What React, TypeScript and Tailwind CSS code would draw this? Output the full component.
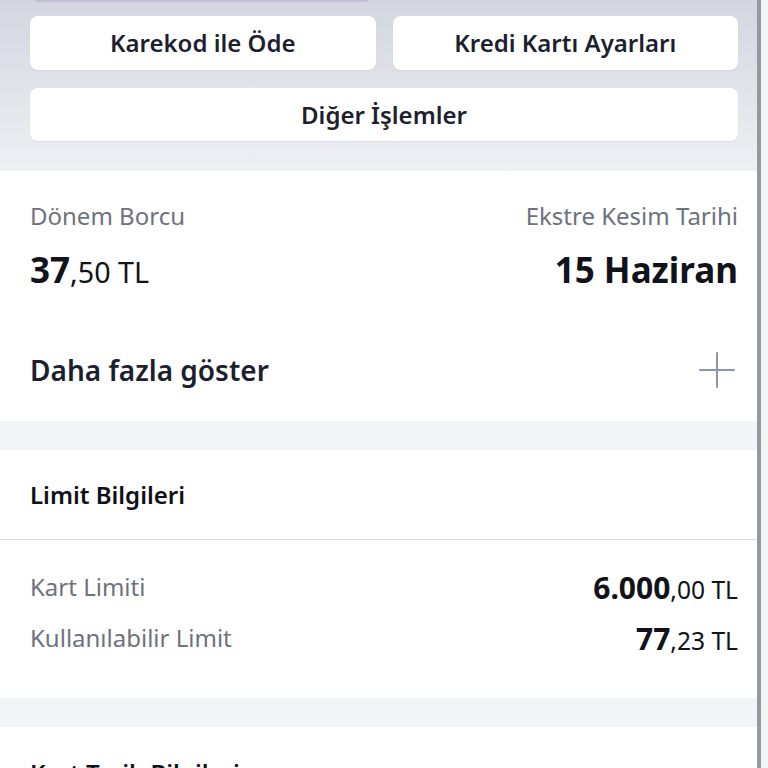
const font = { fontFamily: "'Noto Sans', Lato, sans-serif" };

const ActionButton = ({ label, className = "" }: { label: string; className?: string }) => {
	return (
		<button
			className={`flex shrink-0 items-center justify-center rounded-lg bg-white text-[24px] font-semibold text-[#1d1f2e] shadow-[0_1px_2px_rgba(30,40,80,0.06)] ${className}`}
		>
			{label}
		</button>
	);
};

const Amount = ({ whole, rest, className = "" }: { whole: string; rest: string; className?: string }) => {
	return (
		<span className={`text-[#11121a] ${className}`}>
			<span className="font-bold">{whole}</span>
			<span className="text-[0.82em] font-normal">{rest}</span>
		</span>
	);
};

const PlusIcon = () => (
	<svg width="36" height="36" viewBox="0 0 36 36" fill="none" className="mr-[3px]">
		<path d="M18 1v34M1 18h34" stroke="#8c95ab" strokeWidth="2" strokeLinecap="round" />
	</svg>
);

const Gap = () => <div className="h-[29px] shrink-0 bg-[#f2f4f8]" />;

export default function App() {
	return (
		<div className="flex h-[768px] w-[768px] overflow-hidden bg-white" style={font}>
			<main className="flex w-[757px] shrink-0 flex-col">
				<header className="flex shrink-0 flex-col bg-gradient-to-b from-[#d3d6e0] to-[#eef0f4] pl-[30px] pr-[19px] pb-[30px]">
					<div className="ml-[5px] h-[2px] w-[333px] rounded-b bg-[#c4bfd4]" />
					<div className="mt-[14px] grid grid-cols-2 gap-[17px]">
						<ActionButton label="Karekod ile Öde" className="h-[54px]" />
						<ActionButton label="Kredi Kartı Ayarları" className="h-[54px]" />
					</div>
					<ActionButton label="Diğer İşlemler" className="mt-[18px] h-[53px]" />
				</header>

				<section className="flex shrink-0 flex-col bg-white pl-[30px] pr-[19px] pt-[30px] pb-[31px]">
					<div className="flex h-[30px] items-center justify-between text-[24px] text-[#6e727c]">
						<span>Dönem Borcu</span>
						<span>Ekstre Kesim Tarihi</span>
					</div>
					<div className="mt-[19px] flex h-[40px] items-center justify-between">
						<Amount whole="37" rest=",50 TL" className="text-[35px]" />
						<span className="text-[35px] font-bold text-[#11121a]">15 Haziran</span>
					</div>
					<div className="mt-[60px] flex h-[40px] items-center justify-between">
						<span className="text-[28px] font-semibold text-[#1d1f2e]">Daha fazla göster</span>
						<PlusIcon />
					</div>
				</section>

				<Gap />

				<section className="flex shrink-0 flex-col bg-white">
					<div className="flex h-[89px] items-center px-[30px] text-[24px] font-semibold text-[#0f1016]">
						Limit Bilgileri
					</div>
					<div className="h-px bg-[#dcdde1]" />
					<div className="flex flex-col pl-[30px] pr-[19px] pt-[32px] pb-[45px]">
						<div className="flex h-[30px] items-center justify-between">
							<span className="text-[24px] text-[#6e727c]">Kart Limiti</span>
							<Amount whole="6.000" rest=",00 TL" className="text-[30px]" />
						</div>
						<div className="mt-[21px] flex h-[30px] items-center justify-between">
							<span className="text-[24px] text-[#6e727c]">Kullanılabilir Limit</span>
							<Amount whole="77" rest=",23 TL" className="text-[30px]" />
						</div>
					</div>
				</section>

				<Gap />

				<section className="flex shrink-0 flex-col bg-white">
					<div className="flex h-[92px] items-center px-[30px] text-[24px] font-semibold text-[#0f1016]">
						Kart Tarih Bilgileri
					</div>
				</section>
			</main>
			<div className="w-[4px] shrink-0 bg-[#96989e]" />
			<div className="flex-1 bg-[#f4f5f7]" />
		</div>
	);
}
